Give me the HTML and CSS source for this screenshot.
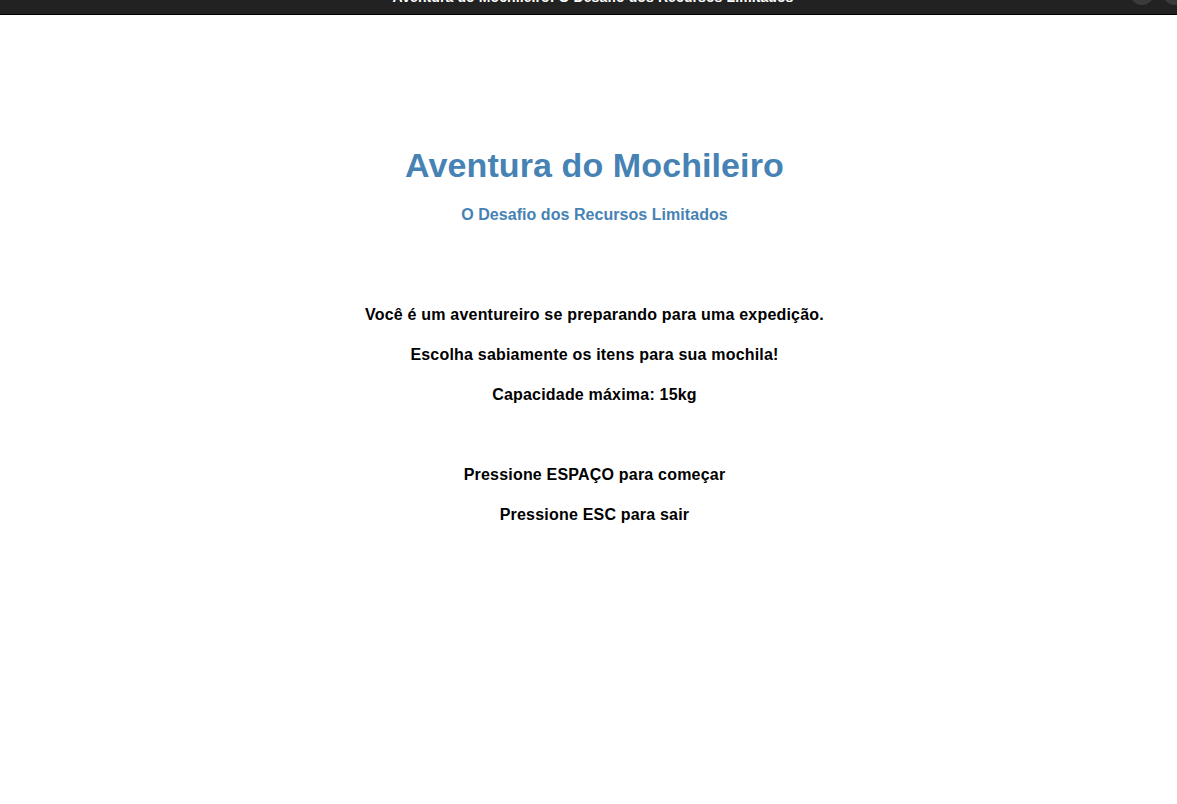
FILE: index.html
```html
<!DOCTYPE html>
<html lang="pt">
<head>
<meta charset="utf-8">
<title>Aventura do Mochileiro: O Desafio dos Recursos Limitados</title>
<link rel="stylesheet" href="styles.css">
</head>
<body>
<header class="titlebar">
  <span class="titlebar-text">Aventura do Mochileiro: O Desafio dos Recursos Limitados</span>
  <div class="win-buttons">
    <span class="win-btn"></span>
    <span class="win-btn"></span>
  </div>
</header>
<main class="screen">
  <h1 class="title">Aventura do Mochileiro</h1>
  <h2 class="subtitle">O Desafio dos Recursos Limitados</h2>
  <div class="intro">
    <p class="line">Você é um aventureiro se preparando para uma expedição.</p>
    <p class="line">Escolha sabiamente os itens para sua mochila!</p>
    <p class="line">Capacidade máxima: 15kg</p>
  </div>
  <div class="controls">
    <p class="line">Pressione ESPAÇO para começar</p>
    <p class="line">Pressione ESC para sair</p>
  </div>
</main>
</body>
</html>
```

FILE: styles.css
```css
html, body {
  margin: 0;
  padding: 0;
  background: #ffffff;
  font-family: "Liberation Sans", Arial, sans-serif;
}

.titlebar {
  position: relative;
  height: 14px;
  padding-left: 9px;
  background: #222222;
  border-bottom: 1px solid #000000;
  overflow: hidden;
  display: flex;
  justify-content: center;
  align-items: flex-end;
}

.titlebar-text {
  color: #ffffff;
  font-weight: bold;
  font-size: 14px;
  line-height: 16px;
  letter-spacing: 0.1px;
  margin-bottom: 9px;
  white-space: nowrap;
}

.win-buttons {
  position: absolute;
  right: -10px;
  top: -19px;
  display: flex;
  gap: 9px;
}

.win-btn {
  width: 24px;
  height: 24px;
  border-radius: 50%;
  background: #3a3a3a;
}

.screen {
  display: flex;
  flex-direction: column;
  align-items: center;
  padding-top: 130px;
  padding-left: 12px;
}

.title {
  margin: 0;
  font-size: 34px;
  line-height: 40px;
  font-weight: bold;
  letter-spacing: 0.1px;
  color: #4682b4;
}

.subtitle {
  margin: 10px 0 0;
  font-size: 16px;
  line-height: 40px;
  font-weight: bold;
  letter-spacing: 0.05px;
  color: #4682b4;
}

.intro {
  margin-top: 60px;
  display: flex;
  flex-direction: column;
  align-items: center;
}

.controls {
  margin-top: 40px;
  display: flex;
  flex-direction: column;
  align-items: center;
}

.line {
  margin: 0;
  font-size: 16px;
  line-height: 40px;
  font-weight: bold;
  letter-spacing: 0.2px;
  color: #000000;
}
```
